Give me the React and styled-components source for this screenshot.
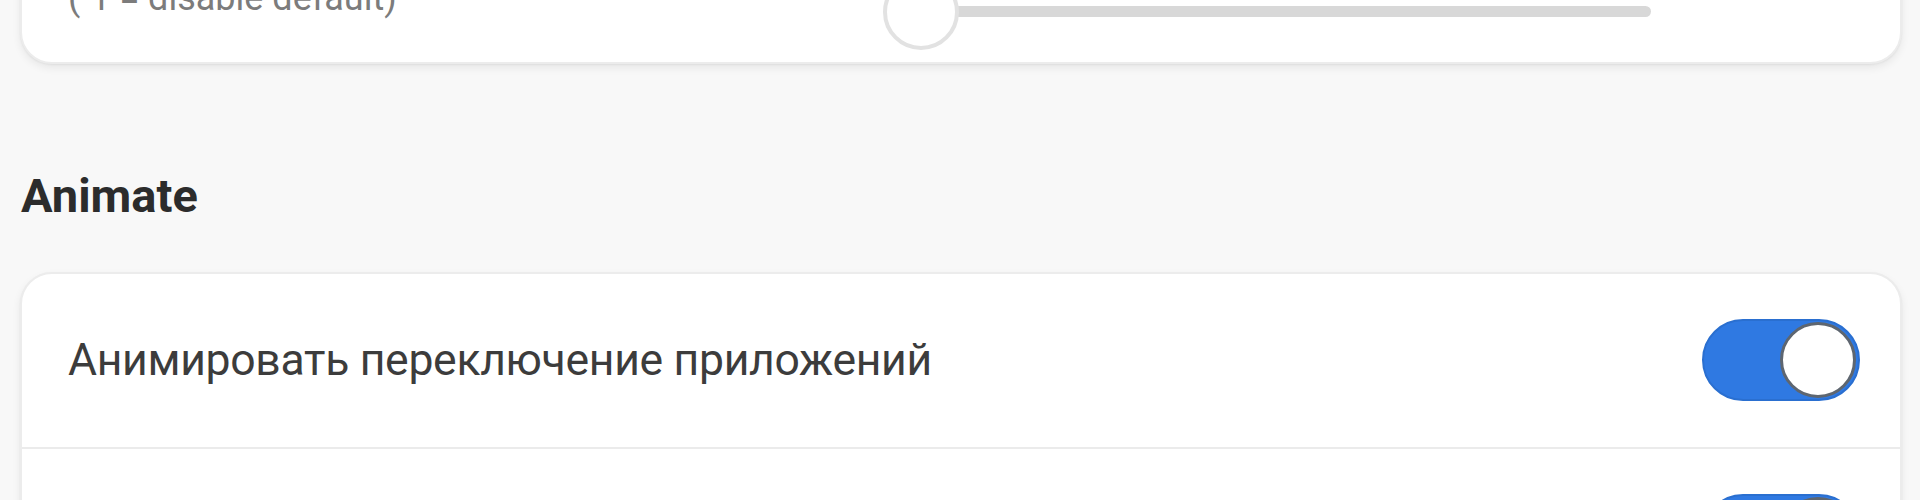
import React from "react";
import styled, { createGlobalStyle } from "styled-components";

const Global = createGlobalStyle`
  html, body {
    margin: 0;
    padding: 0;
    background: #f8f8f8;
    font-family: Roboto, "Noto Sans", "Liberation Sans", sans-serif;
    overflow: hidden;
  }
`;

const Page = styled.div`
  margin-top: -117px;
  padding: 0 18px 0 20px;
`;

const Card = styled.div`
  background: #ffffff;
  border: 2px solid #ececec;
  border-radius: 32px;
  box-shadow: 0 4px 8px rgba(0, 0, 0, 0.07), 0 1px 2px rgba(0, 0, 0, 0.05);
  overflow: hidden;
`;

const SliderCard = styled(Card)`
  display: flex;
  align-items: flex-end;
  padding: 30px 40px 12px 46px;
`;

const TextCol = styled.div`
  flex: none;
  width: 815px;
  display: flex;
  flex-direction: column;
  gap: 6px;
  padding-bottom: 30px;
`;

const Title = styled.div`
  font-size: 45px;
  line-height: 55px;
  color: #3a3a3a;
`;

const Desc = styled.div`
  font-size: 36px;
  line-height: 44px;
  color: #7c7c7c;
`;

const Slider = styled.div`
  position: relative;
  width: 768px;
  height: 76px;
  flex: none;
`;

const Track = styled.div`
  position: absolute;
  left: 38px;
  right: 0;
  top: 32px;
  height: 11px;
  border-radius: 6px;
  background: #d8d8d8;
`;

const Thumb = styled.div`
  position: absolute;
  left: 0;
  top: 0;
  width: 76px;
  height: 76px;
  box-sizing: border-box;
  border-radius: 50%;
  background: #ffffff;
  border: 4px solid #e2e2e2;
`;

const SectionTitle = styled.h2`
  margin: 103px 0 47px 1px;
  font-size: 47px;
  line-height: 57.6px;
  font-weight: 700;
  color: #2c2c2c;
`;

const Row = styled.div`
  display: flex;
  align-items: center;
  justify-content: space-between;
  min-height: 173px;
  padding: 0 40px 0 46px;
  & + & {
    border-top: 2px solid #ebebeb;
  }
`;

const RowLabel = styled.span`
  font-size: 44.5px;
  color: #3c3c3c;
  letter-spacing: -0.3px;
`;

const Toggle = styled.div`
  position: relative;
  flex: none;
  width: 158px;
  height: 82px;
  border-radius: 41px;
  box-sizing: border-box;
  background: ${(p) => (p.$on ? "#2f79e2" : "#cfcfcf")};
  border: 2px solid ${(p) => (p.$on ? "#2a6fd0" : "#bdbdbd")};
`;

const Knob = styled.div`
  position: absolute;
  top: 1px;
  ${(p) => (p.$on ? "right: 2px;" : "left: 2px;")}
  width: 76px;
  height: 76px;
  box-sizing: border-box;
  border-radius: 50%;
  background: #ffffff;
  border: 3px solid #5e6670;
`;

function Switch({ on }) {
  return (
    <Toggle $on={on}>
      <Knob $on={on} />
    </Toggle>
  );
}

export default function App() {
  return (
    <>
      <Global />
      <Page>
        <SliderCard>
          <TextCol>
            <Title>Задержка анимации</Title>
            <Desc>(-1 = disable default)</Desc>
          </TextCol>
          <Slider>
            <Track />
            <Thumb />
          </Slider>
        </SliderCard>
        <SectionTitle>Animate</SectionTitle>
        <Card>
          <Row>
            <RowLabel>Анимировать переключение приложений</RowLabel>
            <Switch on />
          </Row>
          <Row>
            <RowLabel>Анимировать открытие папок</RowLabel>
            <Switch on />
          </Row>
        </Card>
      </Page>
    </>
  );
}
